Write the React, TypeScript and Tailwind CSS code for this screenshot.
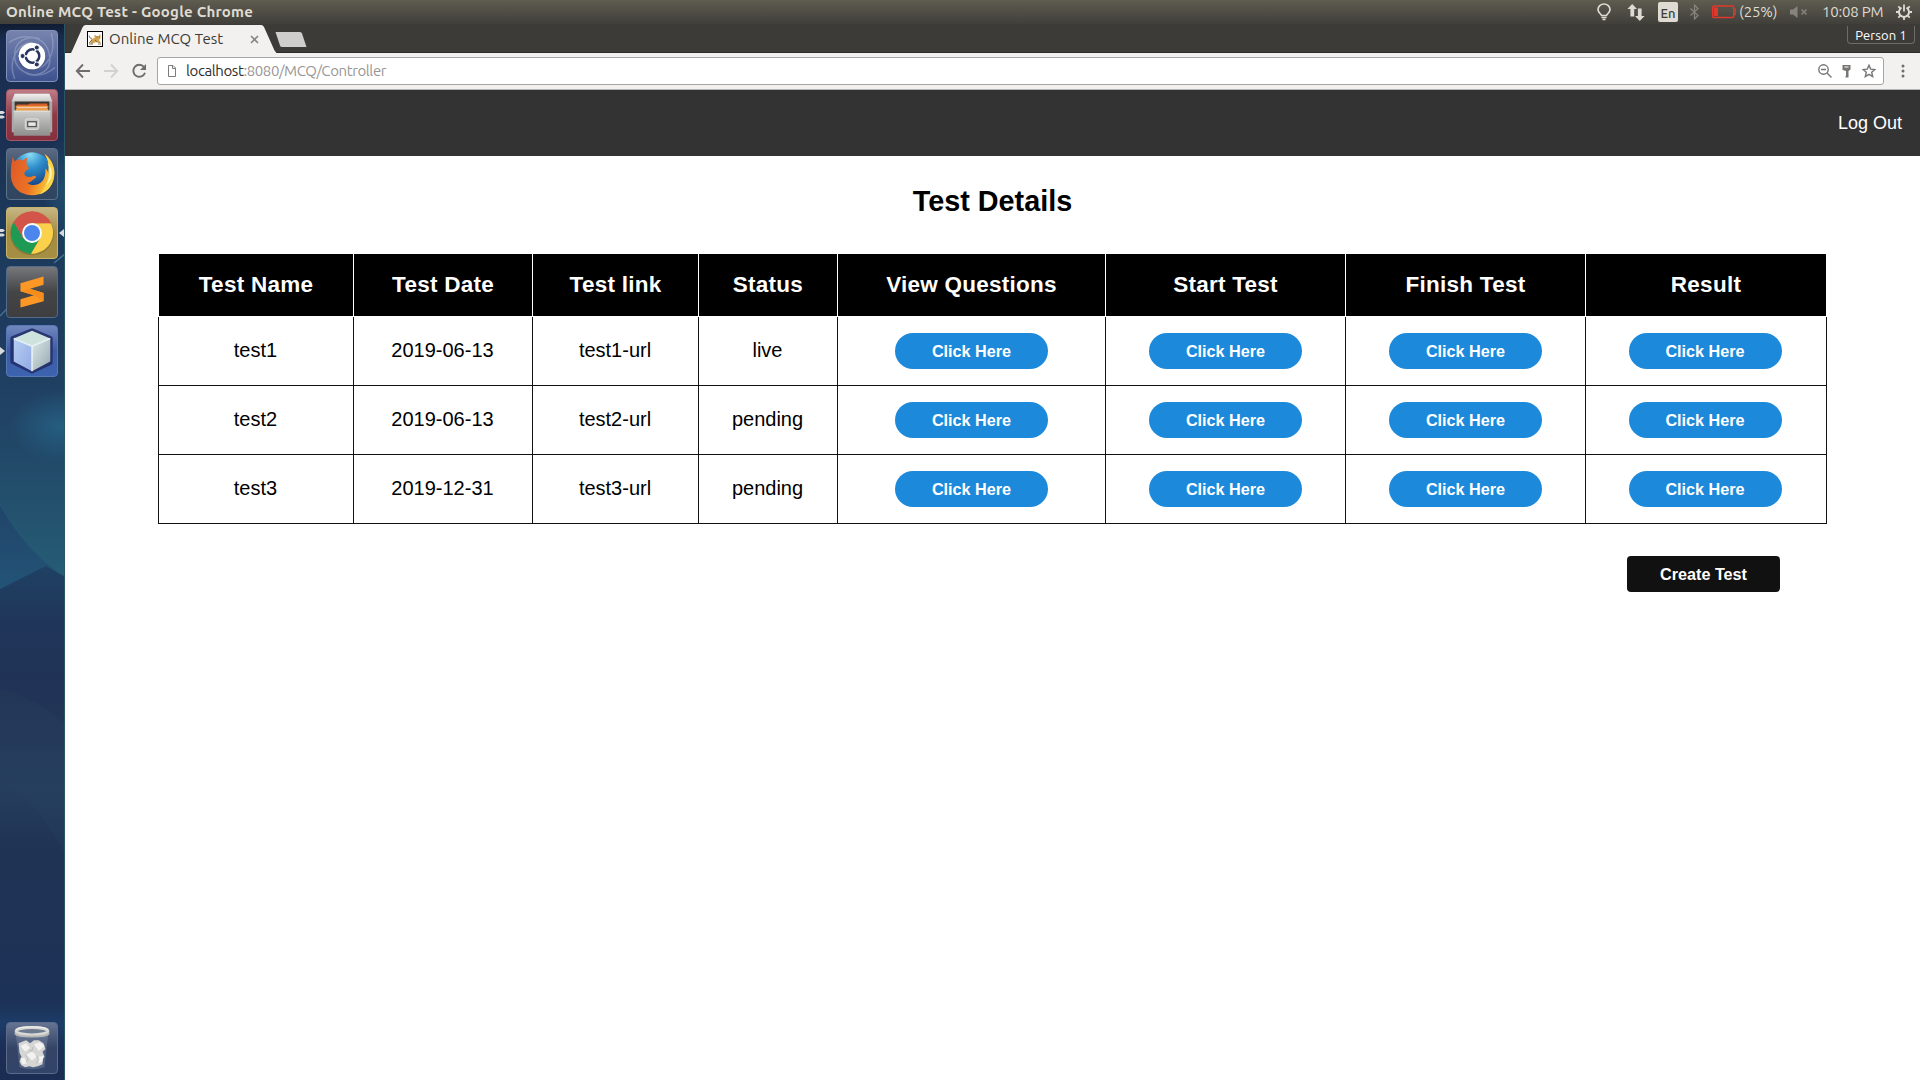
import type { ReactNode } from "react";

const headers = [
  { label: "Test Name", width: "w-[195px]" },
  { label: "Test Date", width: "w-[179px]" },
  { label: "Test link", width: "w-[166px]" },
  { label: "Status", width: "w-[139px]" },
  { label: "View Questions", width: "w-[268px]" },
  { label: "Start Test", width: "w-[240px]" },
  { label: "Finish Test", width: "w-[240px]" },
  { label: "Result", width: "w-[241px]" },
];

const tests = [
  { name: "test1", date: "2019-06-13", link: "test1-url", status: "live" },
  { name: "test2", date: "2019-06-13", link: "test2-url", status: "pending" },
  { name: "test3", date: "2019-12-31", link: "test3-url", status: "pending" },
];

function BulbIcon() {
  return (
    <svg width="16" height="18" viewBox="0 0 16 18" fill="none" stroke="#dfdbd2" strokeWidth="1.7">
      <path d="M5.5 12.5C5.3 11 2 9.800 2 6.600a6 5.600 0 0 1 12 0c0 3.200-3.300 4.400-3.500 5.900z" />
      <path d="M5.500 14.500h5M6.500 16.500h3" strokeWidth="1.500" />
    </svg>
  );
}

function NetworkIcon() {
  return (
    <svg width="18" height="17" viewBox="0 0 18 17" fill="#dfdbd2">
      <path d="M5.200 0 L10 5H7.200V12.500H3.400V5H0.400z" />
      <path d="M12.800 17 L8 12h2.900V4.500h3.700V12h3z" />
    </svg>
  );
}

function BluetoothIcon() {
  return (
    <svg width="9" height="16" viewBox="0 0 9 16" fill="none" stroke="#85837b" strokeWidth="1.3">
      <path d="M0.500 4.500 L8 11.500 L4.500 15V1L8 4.500L0.500 11.500" />
    </svg>
  );
}

function BatteryIcon() {
  return (
    <svg width="24" height="14" viewBox="0 0 24 14">
      <rect x="0.700" y="1" width="21" height="11.500" rx="1" fill="none" stroke="#df382c" strokeWidth="1.400" />
      <rect x="2" y="2.500" width="4" height="8.500" fill="#df382c" />
      <path d="M22 4h1.300v5.500H22" fill="none" stroke="#df382c" strokeWidth="1.200" />
    </svg>
  );
}

function MuteIcon() {
  return (
    <svg width="18" height="12" viewBox="0 0 18 12" fill="#85837b">
      <path d="M0 3.500h3L7.500 0v12L3 8.500H0z" />
      <path d="M11.500 3.500l5 5M16.500 3.500l-5 5" stroke="#85837b" strokeWidth="1.500" />
    </svg>
  );
}

function SessionIcon() {
  return (
    <svg width="16" height="16" viewBox="0 0 16 16" fill="none" stroke="#dfdbd2">
      <path d="M5.500 3.600a5 5 0 1 0 5 0" strokeWidth="1.900" />
      <path d="M8 0.500v7" strokeWidth="1.800" />
      <path d="M0 8h3M13 8h3M8 13v3M2.300 2.300l2 2M13.700 2.300l-2 2M2.300 13.700l2-2M13.700 13.700l-2-2" strokeWidth="1.800" />
    </svg>
  );
}

function TopPanel() {
  return (
    <div className="flex h-6 shrink-0 items-center justify-between bg-linear-to-b from-[#5f5c50] to-[#403f3a] pr-2 pl-1.5 text-[#dfdbd2]">
      <span className="text-[15px] leading-6 font-bold tracking-[0.250px] whitespace-nowrap">Online MCQ Test - Google Chrome</span>
      <div className="flex items-center text-[15px] leading-6">
        <div className="mr-[15px]"><BulbIcon /></div>
        <div className="mr-[13px]"><NetworkIcon /></div>
        <div className="mr-[12px] flex h-5 w-5 items-center justify-center rounded-xs bg-[#dfdbd2] pt-px text-[13px] font-medium text-[#3c3b37]">En</div>
        <div className="mr-[13px]"><BluetoothIcon /></div>
        <div className="mr-[3px]"><BatteryIcon /></div>
        <div className="mr-[13px] w-[38px] tracking-[-0.100px] whitespace-nowrap">(25%)</div>
        <div className="mr-[14px]"><MuteIcon /></div>
        <div className="mr-[14px] w-[60px] tracking-[-0.200px] whitespace-nowrap">10:08 PM</div>
        <SessionIcon />
      </div>
    </div>
  );
}

function Wallpaper() {
  return (
    <svg className="absolute inset-0" width="65" height="1056" viewBox="0 0 65 1056">
      <defs>
        <linearGradient id="wall" x1="0" y1="0" x2="0" y2="1">
          <stop offset="0" stopColor="#101c33" />
          <stop offset="0.015" stopColor="#1a2d50" />
          <stop offset="0.120" stopColor="#1b3255" />
          <stop offset="0.200" stopColor="#1c3a5b" />
          <stop offset="0.300" stopColor="#1f3b5f" />
          <stop offset="0.400" stopColor="#214767" />
          <stop offset="0.520" stopColor="#265c75" />
          <stop offset="0.560" stopColor="#1f3358" />
          <stop offset="1" stopColor="#1f3358" />
        </linearGradient>
        <linearGradient id="curve" x1="0" y1="0" x2="0" y2="1">
          <stop offset="0" stopColor="#21446a" />
          <stop offset="1" stopColor="#225577" />
        </linearGradient>
        <linearGradient id="deep" x1="0" y1="0" x2="0" y2="1">
          <stop offset="0" stopColor="#1f4163" />
          <stop offset="0.120" stopColor="#1f3559" />
          <stop offset="0.250" stopColor="#213356" />
          <stop offset="0.430" stopColor="#263e5d" />
          <stop offset="0.560" stopColor="#1f3355" />
          <stop offset="0.850" stopColor="#1c3256" />
          <stop offset="0.890" stopColor="#1c3c68" />
          <stop offset="0.940" stopColor="#1c2e56" />
          <stop offset="1" stopColor="#1b2d52" />
        </linearGradient>
        <radialGradient id="glow">
          <stop offset="0" stopColor="#266488" stopOpacity="0.800" />
          <stop offset="1" stopColor="#266488" stopOpacity="0" />
        </radialGradient>
      </defs>
      <rect width="65" height="1056" fill="url(#wall)" />
      <ellipse cx="60" cy="402" rx="50" ry="36" fill="url(#glow)" />
      <ellipse cx="62" cy="165" rx="20" ry="50" fill="url(#glow)" opacity="0.600" />
      <path d="M0 292L24 267M54 239L65 230" stroke="#5a8fa2" strokeWidth="1.500" opacity="0.650" />
      <path d="M0 482Q28 530 65 553V570H0z" fill="url(#curve)" />
      <path d="M0 565L46 542L65 553V1056H0z" fill="url(#deep)" />
      <path d="M0 750Q42 785 65 830V700Q30 670 0 665z" fill="#2b4562" opacity="0.200" />
      <rect x="64" width="1" height="1056" fill="#2a5468" />
    </svg>
  );
}

function UbuntuLogo() {
  return (
    <svg width="50" height="50" viewBox="0 0 52 52">
      <g fill="none" stroke="#a9b5d3" strokeWidth="1.500" opacity="0.450">
        <path d="M2 12C16 2 40 4 44 24S30 48 20 44" />
        <path d="M50 38C34 52 10 46 8 28S22 4 34 8" />
        <path d="M8 50C0 30 12 12 26 12" />
        <path d="M46 2C52 22 42 40 26 40" />
      </g>
      <circle cx="26" cy="27" r="14.200" fill="#33406e" opacity="0.500" />
      <circle cx="26" cy="26" r="13.800" fill="#fff" />
      <circle cx="26.500" cy="26" r="7" fill="none" stroke="#27365f" strokeWidth="2.800" />
      <path d="M26 26H12M26 26L33 14M26 26L33 38" stroke="#fff" strokeWidth="1.400" />
      <circle cx="26.500" cy="26" r="5.500" fill="#fff" />
      <g fill="#27365f" stroke="#fff" strokeWidth="1">
        <circle cx="16.200" cy="26" r="2.600" />
        <circle cx="31" cy="17.200" r="2.600" />
        <circle cx="31" cy="34.800" r="2.600" />
      </g>
    </svg>
  );
}

function FilesLogo() {
  return (
    <svg width="50" height="50" viewBox="0 0 52 52">
      <defs>
        <linearGradient id="cab" x1="0" y1="0" x2="0" y2="1">
          <stop offset="0" stopColor="#cfcfcd" />
          <stop offset="1" stopColor="#8e8e8c" />
        </linearGradient>
        <linearGradient id="cabTop" x1="0" y1="0" x2="0" y2="1">
          <stop offset="0" stopColor="#f0f0ee" />
          <stop offset="1" stopColor="#c9c9c7" />
        </linearGradient>
      </defs>
      <path d="M8 4h36l3 7v33H5V11z" fill="#a9a9a7" />
      <path d="M8 4h36l3 8H5z" fill="url(#cabTop)" />
      <rect x="8" y="12" width="36" height="12" fill="#3a3431" />
      <path d="M10 15h12l2-1h18v8H10z" fill="#d6612b" />
      <rect x="9" y="16.500" width="34" height="1.500" fill="#f0a04e" />
      <rect x="10" y="18" width="32" height="1.200" fill="#fff3df" />
      <rect x="9" y="19.200" width="34" height="3" fill="#ee9c42" />
      <path d="M7 21.500h38v26H7z" fill="url(#cab)" />
      <path d="M7 22h38" stroke="#e3e3e1" />
      <rect x="19" y="30" width="14" height="11" rx="2" fill="#c4c4c2" stroke="#dededc" />
      <rect x="21.500" y="33" width="9" height="5" fill="#e8e8e6" stroke="#555553" strokeWidth="1.300" />
    </svg>
  );
}

function FirefoxLogo() {
  return (
    <svg width="50" height="50" viewBox="0 0 52 52">
      <defs>
        <radialGradient id="globe" cx="0.450" cy="0.050" r="0.850">
          <stop offset="0" stopColor="#8bdcf5" />
          <stop offset="0.400" stopColor="#2f8fcc" />
          <stop offset="1" stopColor="#143a80" />
        </radialGradient>
        <linearGradient id="fox" x1="0" y1="0" x2="1" y2="0.300">
          <stop offset="0" stopColor="#de562a" />
          <stop offset="0.600" stopColor="#ec7424" />
          <stop offset="1" stopColor="#f9c838" />
        </linearGradient>
      </defs>
      <circle cx="26" cy="24.500" r="21" fill="url(#globe)" />
      <path d="M6 8L8 13C11 10.500 14 10.500 17 12C19 9 21 9 21 9C20 13 20 16 21 18C23 19 23 20 22 21C19 22 18 24 18 26C19 29 24 30 27 28C29 27 31 29 30 30C27 31 26 35 21 35C25 39 33 38 37 33C40 29 40 24 40 20C42 22 43 24 43 26C45 18 43 11 39 5C47 11 52 22 48 33C45 43 36 48 26 48C12 48 3 38 4 24C4 18 5 13 6 8z" fill="url(#fox)" />
      <path d="M39 5C48 12 51 23 48 33C45 41 40 45 34 47C42 38 44 30 43 22C44 15 42 10 39 5z" fill="#fbd64b" />
      <path d="M42 14C46 22 45 30 40 38C48 32 49 22 42 14z" fill="#fff3ae" />
    </svg>
  );
}

function ChromeLogo() {
  return (
    <svg width="50" height="50" viewBox="0 0 52 52">
      <circle cx="26" cy="26.500" r="22.700" fill="#5c4b1c" opacity="0.300" />
      <path d="M7 14.500A22 22 0 0 0 25 47.500L34.500 31L26 26L17 30z" fill="#1f9a55" />
      <path d="M45.700 16A22 22 0 0 1 25 47.500L34.700 31V16z" fill="#fbd04a" />
      <path d="M7 14.500L16.500 31L26 16h20a22 22 0 0 0-39-1.500z" fill="#d35549" />
      <path d="M26 16l9 7 10.700-7z" fill="#fbd04a" />
      <circle cx="26" cy="26" r="10.300" fill="#fff" />
      <circle cx="26" cy="26" r="8.300" fill="#4a86ed" />
    </svg>
  );
}

function SublimeLogo() {
  return (
    <svg width="50" height="50" viewBox="0 0 52 52">
      <path d="M14 16.800L38 10V18.500L24 22.700L38 27V35.500L14 42V33.500L28 29.500L14 25.300z" fill="#fd9827" />
      <path d="M24 22.700L38 27V35.500L28 29.500L14 25.300z" fill="#f48d1b" />
    </svg>
  );
}

function NetBeansLogo() {
  return (
    <svg width="50" height="50" viewBox="0 0 52 52">
      <defs>
        <linearGradient id="cubeL" x1="0" y1="0" x2="1" y2="1">
          <stop offset="0" stopColor="#b4cff3" />
          <stop offset="1" stopColor="#93a8e3" />
        </linearGradient>
        <linearGradient id="cubeR" x1="0" y1="0" x2="1" y2="1">
          <stop offset="0" stopColor="#dbe8ea" />
          <stop offset="1" stopColor="#97a9ae" />
        </linearGradient>
      </defs>
      <path d="M26 5L45 13V38L26 47L6 37V13z" fill="#1c2867" stroke="#232f6b" strokeWidth="5" strokeLinejoin="round" opacity="0.900" />
      <path d="M26 5L45 13L26 21L7 13z" fill="#cfe3de" />
      <path d="M7 13L26 21V47L7 37z" fill="url(#cubeL)" />
      <path d="M45 13L26 21V47L45 37z" fill="url(#cubeR)" />
      <path d="M7 13L26 21L45 13M26 21V47" fill="none" stroke="#eef8f9" strokeWidth="1.600" strokeLinejoin="round" opacity="0.850" />
    </svg>
  );
}

function TrashLogo() {
  return (
    <svg width="50" height="50" viewBox="0 0 52 52">
      <path d="M9 10L13 46Q26 50 39 46L43 10z" fill="#a7b6cc" opacity="0.250" />
      <path d="M12 21l5-2 3-1 4 3 4-3 5 0 5 3 2 6-3 3 2 5-2 3v5l-5 2-5 1-4-1-4 1-4-2-2-4 2-5-2-4z" fill="#d6d6d4" />
      <path d="M14 24l6-3 4 5-5 4zM28 22l6-2 5 4-6 5zM20 33l6-3 6 4-6 5zM33 35l5-1-1 6-4 2zM14 37l4-1 3 6-5 1z" fill="#f2f2f0" />
      <path d="M23 28l3 1 1-4M30 33l3 5-3 4M19 33l3 4-2 4" fill="none" stroke="#b9bbbb" />
      <ellipse cx="26" cy="8.500" rx="16.500" ry="3.800" fill="#6e7a8e" stroke="#d8d8d6" strokeWidth="3" />
      <path d="M8 9v3q2 3 18 3t18-3V9q-2 4-18 4T8 9z" fill="#b7b8b6" />
      <path d="M9.500 7q2-3 16.500-3t16.500 3" fill="none" stroke="#f4f4f2" />
    </svg>
  );
}

const launcher: { key: string; tile: string; icon: ReactNode; left?: "pips" | "arrow"; focus?: boolean }[] = [
  { key: "dash", tile: "from-[#7884ae] to-[#3e5290] border-[#8391b9]", icon: <UbuntuLogo /> },
  { key: "files", tile: "from-[#bf7d88] via-[#8f3947] to-[#86303d] border-[#a75764]", icon: <FilesLogo />, left: "pips" },
  { key: "firefox", tile: "from-[#5c6a83] via-[#36495f] to-[#2f4560] border-[#5c7389]", icon: <FirefoxLogo /> },
  { key: "chrome", tile: "from-[#c7b684] via-[#a58c40] to-[#a58f43] border-[#c9b46c]", icon: <ChromeLogo />, left: "pips", focus: true },
  { key: "sublime", tile: "from-[#77787c] via-[#444547] to-[#3e3e40] border-[#526b88]", icon: <SublimeLogo /> },
  { key: "netbeans", tile: "from-[#7086bd] via-[#3d5ba5] to-[#3c64b0] border-[#5679b5]", icon: <NetBeansLogo />, left: "arrow" },
];

function LauncherTile({ tile, children }: { tile: string; children: ReactNode }) {
  return (
    <div className={`flex h-[52px] w-[52px] items-center justify-center rounded-[4px] border bg-linear-to-b ${tile}`}>
      {children}
    </div>
  );
}

function Launcher() {
  return (
    <aside className="relative flex w-[65px] shrink-0 flex-col justify-between overflow-hidden pt-1.5 pb-1.5">
      <Wallpaper />
      <div className="relative flex flex-col gap-[7px]">
        {launcher.map((item) => (
          <div key={item.key} className="relative pl-1.5">
            <LauncherTile tile={item.tile}>{item.icon}</LauncherTile>
            {item.left === "pips" && (
              <svg className="absolute top-[22px] left-0" width="5" height="8" fill="#d8dade">
                <path d="M0 0h3l2 1.500L3 3H0zM0 4.500h3L5 6L3 7.500H0z" />
              </svg>
            )}
            {item.left === "arrow" && (
              <svg className="absolute top-[22px] left-0" width="5" height="8" fill="#d8dade"><path d="M0 0L5 4L0 8z" /></svg>
            )}
            {item.focus && (
              <svg className="absolute top-[22px] right-0" width="6" height="8" fill="#d8dade"><path d="M5 0L0 4L5 8z" /></svg>
            )}
          </div>
        ))}
      </div>
      <div className="relative pl-1.5">
        <LauncherTile tile="from-[#667492] via-[#344466] to-[#33446a] border-[#5a6a88]"><TrashLogo /></LauncherTile>
      </div>
    </aside>
  );
}

function Favicon() {
  return (
    <svg width="16" height="16" viewBox="0 0 16 16">
      <rect x="0.500" y="0.500" width="15" height="15" fill="#fff" stroke="#000" />
      <path d="M3 11l1.500-3 3-1L7.500 3.500l2 1.500h2L13.500 3v4.500L12 9l2 3h-3L9 11 7 12l-3 1z" fill="#cfa350" />
      <path d="M2 4.500q0 3 3 3M5 9l-3 3M9.500 6h1M12 6h1M8 9l2 2M2 13h4M11 13h3" fill="none" stroke="#75684e" strokeWidth="0.900" />
    </svg>
  );
}

function TabStrip() {
  return (
    <div className="relative flex h-[29px] shrink-0 items-start border-b border-[#2d2c29] bg-[#3c3b37]">
      <div className="relative ml-[6px] h-[29px] w-[206px] shrink-0">
        <svg className="absolute top-0 left-0" width="206" height="29" viewBox="0 0 206 29">
          <path d="M0 29L1.500 26L11.500 3.500Q12.500 1 14.500 1H190Q192 1 193 3L203.500 26.500L205.500 29z" fill="#f2f1f0" />
        </svg>
        <div className="relative flex h-[29px] items-center pt-px pl-[16px]">
          <Favicon />
          <span className="ml-[6px] w-[141px] text-[15px] tracking-[0.050px] whitespace-nowrap text-[#3c3b37]">Online MCQ Test</span>
          <svg width="9" height="9" viewBox="0 0 9 9" stroke="#888684" strokeWidth="1.600"><path d="M1 1l7 7M8 1l-7 7" /></svg>
        </div>
      </div>
      <svg className="mt-2 -ml-[3px]" width="33" height="15" viewBox="0 0 33 15">
        <path d="M1.500 0H26Q27.500 0 28 1.500L32.500 15H8Q6.500 15 6 13.500z" fill="#cfcecd" />
      </svg>
      <div className="mr-[5px] ml-auto mt-[2px] flex h-[18px] w-[68px] items-center justify-center rounded-b-[4px] border border-t-0 border-[#6d6c68] pt-0.5 text-[13px] tracking-[0.100px] whitespace-nowrap text-white">
        Person 1
      </div>
    </div>
  );
}

function Toolbar() {
  return (
    <div className="flex h-[37px] shrink-0 items-center border-b border-[#b5b4b2] bg-[#f2f1f0] pl-[10px]">
      <svg width="74" height="16" viewBox="0 0 74 16" fill="none" strokeWidth="1.900">
        <path d="M15 8H2M8 1.500L1.800 8L8 14.500" stroke="#6e6d6b" />
        <path d="M29 8h13M36 1.500L42.200 8L36 14.500" stroke="#d2d1d0" />
        <path d="M69 4A6 6 0 1 0 70 9.800" stroke="#6e6d6b" />
        <path d="M71 1v6h-6z" fill="#6e6d6b" />
      </svg>
      <div className="ml-[8px] flex h-7 flex-1 items-center rounded-[3px] border border-[#a6a5a3] bg-white pl-[10px]">
        <svg width="8" height="12" viewBox="0 0 8 12" fill="none" stroke="#7d7c7a" strokeWidth="1">
          <path d="M0.500 0.500h4.500l2.500 2.500v8.500H0.500zM4.500 0.500v3h3" />
        </svg>
        <span className="ml-[10px] text-[15px] tracking-[-0.400px] whitespace-nowrap text-[#979695]">
          <span className="text-[#2e2d2b]">localhost</span>:8080/MCQ/Controller
        </span>
        <div className="mr-[7px] ml-auto flex items-center">
          <svg width="14" height="14" viewBox="0 0 14 14" fill="none" stroke="#767573" strokeWidth="1.400">
            <circle cx="5.500" cy="5.500" r="4.700" />
            <path d="M3 5.500h5M9 9l4.500 4.500" />
          </svg>
          <svg className="ml-[10px]" width="9" height="13" viewBox="0 0 9 13" fill="#767573">
            <path d="M0.500 0h8v4.500L6.500 6v6.500H3.500V11H4V6L0.500 5z" />
            <path d="M2.500 2h4" stroke="#fff" strokeWidth="1" />
          </svg>
          <svg className="ml-[11px]" width="14" height="14" viewBox="0 0 14 14" fill="none" stroke="#767573" strokeWidth="1.400">
            <path d="M7 1.200l1.700 3.900 4.200.4-3.200 2.800 1 4.200L7 10.300l-3.700 2.200 1-4.200L1.100 5.500l4.200-.4z" />
          </svg>
        </div>
      </div>
      <svg className="mr-[15px] ml-[17px]" width="4" height="14" fill="#6e6d6b">
        <circle cx="2" cy="2" r="1.500" /><circle cx="2" cy="7" r="1.500" /><circle cx="2" cy="12" r="1.500" />
      </svg>
    </div>
  );
}

function ClickHere() {
  return (
    <button className="mx-auto block h-9 w-[153px] rounded-[18px] bg-[#1c89db] text-[16.200px] font-bold text-white">Click Here</button>
  );
}

function Page() {
  return (
    <main className="flex flex-1 flex-col bg-white font-['Liberation_Sans',Arial,sans-serif] text-black">
      <nav className="flex h-[66px] shrink-0 items-center justify-end bg-[#333] pr-[18px] text-[18px] text-white">Log Out</nav>
      <h1 className="mt-[29px] text-center text-[28.800px] leading-[32px] font-bold">Test Details</h1>
      <table className="mt-[36px] ml-[93px] w-[1669px] table-fixed border-collapse text-center">
        <thead>
          <tr className="h-[63px]">
            {headers.map((h) => (
              <th key={h.label} className={`border border-white bg-black p-0 text-[22.500px] leading-6 font-bold tracking-[0.250px] text-white ${h.width}`}>{h.label}</th>
            ))}
          </tr>
        </thead>
        <tbody>
          {tests.map((t) => (
            <tr key={t.name} className="h-[69px] text-[20px] leading-6 [&>td]:border [&>td]:border-[#111] [&>td]:p-0">
              <td><div className="mb-0.5 pr-px">{t.name}</div></td>
              <td><div className="mb-0.5 pr-px">{t.date}</div></td>
              <td><div className="mb-0.5 pr-px">{t.link}</div></td>
              <td><div className="mb-0.5 pr-px">{t.status}</div></td>
              <td><ClickHere /></td>
              <td><ClickHere /></td>
              <td><ClickHere /></td>
              <td><div className="pr-0.5"><ClickHere /></div></td>
            </tr>
          ))}
        </tbody>
      </table>
      <button className="mt-8 mr-[140px] h-9 w-[153px] self-end rounded-[4px] bg-[#111] text-[16.200px] font-bold text-white">Create Test</button>
    </main>
  );
}

export default function App() {
  return (
    <div className="flex h-screen w-screen flex-col overflow-hidden font-['Ubuntu','Noto_Sans',sans-serif]">
      <TopPanel />
      <div className="flex min-h-0 flex-1">
        <Launcher />
        <div className="flex min-w-0 flex-1 flex-col">
          <TabStrip />
          <Toolbar />
          <Page />
        </div>
      </div>
    </div>
  );
}
